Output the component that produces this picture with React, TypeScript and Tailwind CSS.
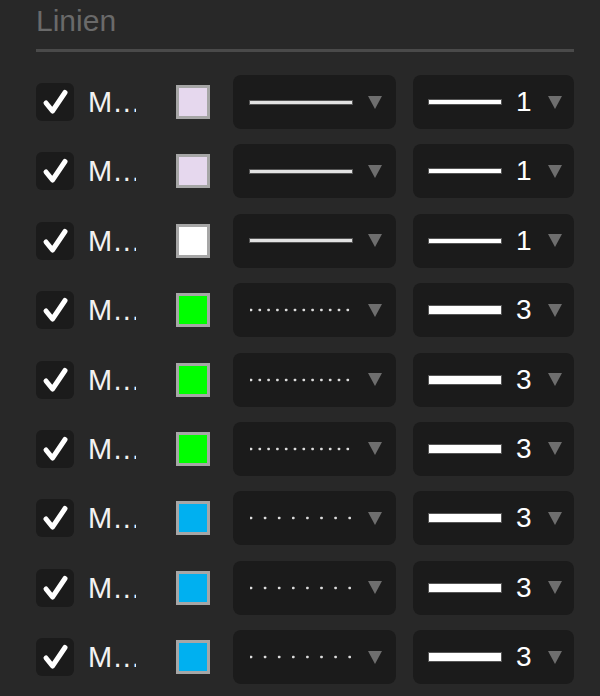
import React from "react";

type Row = { color: string; style: "solid" | "dense" | "sparse"; width: 1 | 3 };

const rows: Row[] = [
  { color: "#e6d8ee", style: "solid", width: 1 },
  { color: "#e6d8ee", style: "solid", width: 1 },
  { color: "#ffffff", style: "solid", width: 1 },
  { color: "#00ff00", style: "dense", width: 3 },
  { color: "#00ff00", style: "dense", width: 3 },
  { color: "#00ff00", style: "dense", width: 3 },
  { color: "#00b0f0", style: "sparse", width: 3 },
  { color: "#00b0f0", style: "sparse", width: 3 },
  { color: "#00b0f0", style: "sparse", width: 3 },
];

function Arrow() {
  return (
    <svg width="14" height="13" viewBox="0 0 14 13" className="shrink-0">
      <polygon points="0,0 14,0 7,13" fill="#6e6e6e" />
    </svg>
  );
}

function StylePreview({ style }: { style: Row["style"] }) {
  if (style === "solid") {
    return <div className="w-[102px] h-[3px] bg-[#e2e2e2] shadow-[0_0_0_1px_#555]" />;
  }
  const n = style === "dense" ? 12 : 8;
  const step = style === "dense" ? 8.8 : 14.1;
  return (
    <svg width="102" height="6" viewBox="0 0 102 6">
      {Array.from({ length: n }).map((_, i) => (
        <rect
          key={i}
          x={1 + i * step - 1.3}
          y={1.7}
          width={2.6}
          height={2.6}
          rx={0.8}
          fill="#dddddd"
        />
      ))}
    </svg>
  );
}

function Check() {
  return (
    <div className="w-[38px] h-[38px] rounded-[6px] bg-[#1b1b1b] flex items-center justify-center shrink-0">
      <svg width="38" height="38" viewBox="0 0 38 38">
        <path
          d="M10 20 L16.5 28 L29 9.5"
          fill="none"
          stroke="#ffffff"
          strokeWidth="5"
          strokeLinecap="round"
          strokeLinejoin="round"
        />
      </svg>
    </div>
  );
}

export default function App() {
  return (
    <div
      className="w-[600px] h-[696px] bg-[#282828] overflow-hidden pl-[36px] pr-[26px]"
      style={{ fontFamily: '"Liberation Sans", Arial, sans-serif' }}
    >
      <div className="pt-[6px] text-[30px] leading-[30px] text-[#6a6a6a]">Linien</div>
      <div className="mt-[13px] h-[3px] bg-[#4a4a4a]" />
      <div className="mt-[23px] flex flex-col gap-[15.375px]">
        {rows.map((r, i) => (
          <div key={i} className="flex items-center h-[54px]">
            <Check />
            <div className="ml-[14px] w-[48px] overflow-hidden whitespace-nowrap text-[29px] leading-[30px] text-[#f2f2f2] shrink-0">
              M…
            </div>
            <div
              className="ml-[40px] w-[34px] h-[34px] border-[3px] border-[#a6a6a6] shrink-0"
              style={{ backgroundColor: r.color }}
            />
            <div className="ml-[23px] w-[163px] h-[54px] rounded-[8px] bg-[#1b1b1b] flex items-center pl-[17px] pr-[14px] justify-between shrink-0">
              <StylePreview style={r.style} />
              <Arrow />
            </div>
            <div className="ml-[17px] w-[161px] h-[54px] rounded-[8px] bg-[#1b1b1b] flex items-center pl-[16px] pr-[12px] shrink-0">
              <div
                className={`w-[72px] bg-white shadow-[0_0_0_1px_#555] ${r.width === 1 ? "h-[4px]" : "h-[8px]"}`}
              />
              <div className="ml-[15px] text-[28px] leading-[30px] text-white w-[18px]">{r.width}</div>
              <div className="ml-auto">
                <Arrow />
              </div>
            </div>
          </div>
        ))}
      </div>
    </div>
  );
}
